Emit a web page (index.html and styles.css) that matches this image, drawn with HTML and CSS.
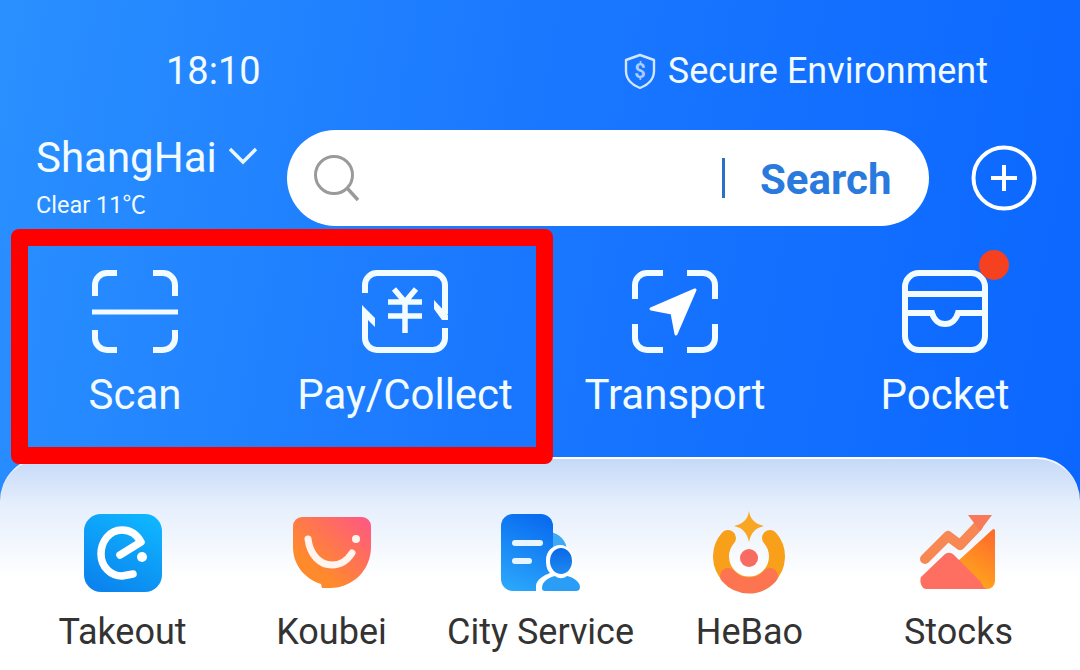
FILE: index.html
```html
<!DOCTYPE html>
<html lang="en">
<head>
  <meta charset="UTF-8" />
  <title>Home</title>
  <link rel="stylesheet" href="styles.css">
</head>
<body>
  <div class="app">

    <div class="status">
      <span class="time">18:10</span>
      <span class="secure">
        <svg class="shield" width="34" height="37" viewBox="0 0 34 37">
          <path d="M17 2 L31 7 V18 C31 26 25 32 17 35 C9 32 3 26 3 18 V7 Z" fill="none" stroke="#d3e6ff" stroke-width="2.4" stroke-linejoin="round"/>
          <text x="17" y="25" text-anchor="middle" class="shield-sign">$</text>
        </svg>
        Secure Environment
      </span>
    </div>

    <div class="search-row">
      <div class="city">
        <div class="city-name">
          ShangHai
          <svg width="30" height="20" viewBox="0 0 30 20"><path d="M2 3 L15 16 L28 3" fill="none" stroke="#eaf7ff" stroke-width="3.4"/></svg>
        </div>
        <div class="weather">Clear 11℃</div>
      </div>
      <div class="search-box">
        <svg width="46" height="47" viewBox="0 0 46 47">
          <circle cx="20" cy="20" r="18.5" fill="none" stroke="#9a9a9a" stroke-width="3"/>
          <path d="M33 33 L44 45" stroke="#9a9a9a" stroke-width="3.4"/>
        </svg>
        <span class="search-line"></span>
        <span class="search-text">Search</span>
      </div>
      <svg class="plus" width="66" height="66" viewBox="0 0 66 66">
        <circle cx="33" cy="33" r="30.5" fill="none" stroke="#fff" stroke-width="4"/>
        <path d="M33 20 V46 M20 33 H46" stroke="#fff" stroke-width="4"/>
      </svg>
    </div>

    <div class="shortcuts">
      <div class="shortcut">
        <svg width="86" height="83" viewBox="0 0 86 83" fill="none" stroke="#f2fbff" stroke-width="6">
          <path d="M3 26 V15 A12 12 0 0 1 15 3 H25 M61 3 H71 A12 12 0 0 1 83 15 V26 M3 60 V68 A12 12 0 0 0 15 80 H25 M61 80 H71 A12 12 0 0 0 83 68 V60"/>
          <path d="M0 42 H86" stroke-width="5"/>
        </svg>
        <span>Scan</span>
      </div>
      <div class="shortcut">
        <svg width="86" height="83" viewBox="0 0 86 83" fill="none" stroke="#f2fbff" stroke-width="6">
          <path d="M3 23 V15 A12 12 0 0 1 15 3 H71 A12 12 0 0 1 83 15 V44 M3 44 V68 A12 12 0 0 0 15 80 H71 A12 12 0 0 0 83 68 V58"/>
          <path d="M72 30 L86 45 V50 H80 L72 39 Z M0 35 L13 48 V57 L6 50 H0 Z" fill="#f2fbff" stroke="none"/>
          <path d="M32 19 L43 32 L54 19 M26 32 H60 M26 46 H60 M43 32 V63" stroke-width="5.5"/>
        </svg>
        <span>Pay/Collect</span>
      </div>
      <div class="shortcut">
        <svg width="86" height="83" viewBox="0 0 86 83" fill="none" stroke="#f2fbff" stroke-width="6">
          <path d="M3 29 V15 A12 12 0 0 1 15 3 H31 M55 3 H71 A12 12 0 0 1 83 15 V29 M3 54 V68 A12 12 0 0 0 15 80 H31 M55 80 H71 A12 12 0 0 0 83 68 V54"/>
          <path d="M63 20 L19 39 L40 43 L44 64 Z" fill="#fff" stroke="#fff" stroke-width="3" stroke-linejoin="round"/>
        </svg>
        <span>Transport</span>
      </div>
      <div class="shortcut">
        <svg width="86" height="83" viewBox="0 0 86 83" fill="none" stroke="#f2fbff" stroke-width="6">
          <rect x="3" y="3" width="80" height="77" rx="14"/>
          <path d="M3 24 H83 M3 43 H30 C32 50 37 54 43 54 C49 54 54 50 56 43 H83"/>
        </svg>
        <span class="dot"></span>
        <span>Pocket</span>
      </div>
    </div>

    <div class="panel">
      <div class="service">
        <div class="service-icon">
          <svg width="78" height="78" viewBox="0 0 78 78">
            <defs>
              <linearGradient id="takeoutBg" x1="0.8" y1="0" x2="0.3" y2="1">
                <stop offset="0" stop-color="#0fb6ff"/>
                <stop offset="1" stop-color="#0b84ee"/>
              </linearGradient>
            </defs>
            <rect width="78" height="78" rx="17" fill="url(#takeoutBg)"/>
            <path d="M36 41 L57 28 C52 19 45 16 38 16 C25 16 17 28 17 40 C17 53 27 62 38 62 L49 60" fill="none" stroke="#fff" stroke-width="7.5" stroke-linecap="round" stroke-linejoin="round"/>
            <circle cx="58" cy="43" r="5" fill="#fff"/>
          </svg>
        </div>
        <span>Takeout</span>
      </div>
      <div class="service">
        <div class="service-icon">
          <svg width="78" height="72" viewBox="0 0 78 72">
            <defs>
              <linearGradient id="koubeiBg" x1="0.1" y1="0.9" x2="1" y2="0">
                <stop offset="0.2" stop-color="#ff8a2c"/>
                <stop offset="1" stop-color="#ff5686"/>
              </linearGradient>
            </defs>
            <path d="M9 0 H69 A9 9 0 0 1 78 9 V30 C78 53 60 71 37 71 L29 71 L28 67 C12 62 0 48 0 30 V9 A9 9 0 0 1 9 0 Z" fill="url(#koubeiBg)"/>
            <path d="M15 22 C17 38 27 48 39 48 C47 48 54 44 59 36" fill="none" stroke="#fff4ee" stroke-width="7" stroke-linecap="round"/>
            <circle cx="63" cy="22" r="4" fill="#fff4ee"/>
          </svg>
        </div>
        <span>Koubei</span>
      </div>
      <div class="service">
        <div class="service-icon">
          <svg width="80" height="78" viewBox="0 0 80 78">
            <defs>
              <linearGradient id="cityBg" x1="0.6" y1="0" x2="0.3" y2="1">
                <stop offset="0" stop-color="#0a6cf0"/>
                <stop offset="1" stop-color="#2aa6fb"/>
              </linearGradient>
              <linearGradient id="cityHead" x1="0" y1="0" x2="0" y2="1">
                <stop offset="0" stop-color="#0a68e6"/>
                <stop offset="1" stop-color="#1d8af0"/>
              </linearGradient>
            </defs>
            <path d="M50 18 C58 20 66 26 66 38 H50 Z" fill="#3fa9f5"/>
            <path d="M12 0 H40 A12 12 0 0 1 52 12 V77 H12 A12 12 0 0 1 0 65 V12 A12 12 0 0 1 12 0 Z" fill="url(#cityBg)"/>
            <rect x="11" y="26" width="31" height="6" rx="3" fill="#e8f5ff"/>
            <rect x="11" y="44" width="20" height="6" rx="3" fill="#e8f5ff"/>
            <path d="M59 31 C67 31 73 38 73 46 C73 52 71 56 68 59 C73 61 80 66 80 72 V78 H35 V72 C35 66 43 61 49 59 C46 56 45 52 45 46 C45 38 51 31 59 31 Z" fill="#fff"/>
            <ellipse cx="60" cy="47" rx="11" ry="13" fill="url(#cityHead)"/>
            <path d="M41 74 C41 67 49 63 54 62 C58 65 62 65 66 62 C71 63 79 67 79 73 C79 76 77 77 75 77 H44 C42 77 41 76 41 74 Z" fill="#2a9df6"/>
          </svg>
        </div>
        <span>City Service</span>
      </div>
      <div class="service">
        <div class="service-icon">
          <svg width="74" height="84" viewBox="1 0 74 84">
            <path d="M37 0 C38 8 43 13 52 15 C43 17 39 22 37 31 C35 22 31 17 22 15 C31 13 36 8 37 0 Z" fill="#f9a625"/>
            <path d="M16 27 A28 28 0 1 0 58 27" fill="none" stroke="#f9a01b" stroke-width="16" stroke-linecap="round"/>
            <path d="M16 65 A28 28 0 0 0 58 65" fill="none" stroke="#fd7550" stroke-width="16" stroke-linecap="round"/>
            <circle cx="37" cy="47" r="9" fill="#f86b60"/>
          </svg>
        </div>
        <span>HeBao</span>
      </div>
      <div class="service">
        <div class="service-icon">
          <svg width="78" height="76" viewBox="2 0 78 76">
            <defs>
              <linearGradient id="stocksBg" x1="0.8" y1="0" x2="0.4" y2="1">
                <stop offset="0" stop-color="#ff6b2b"/>
                <stop offset="1" stop-color="#ffa91c"/>
              </linearGradient>
            </defs>
            <path d="M40 46 L74 15 C76 13 77 14 77 16 V66 A8 8 0 0 1 69 74 H40 Z" fill="url(#stocksBg)"/>
            <path d="M3 62 L26 40 C29 37 33 37 36 40 L62 66 C64 69 66 74 69 74 H8 C4 74 1 67 3 62 Z" fill="#ff6f61"/>
            <path d="M7 44 L30 21 L42 30 L60 11" fill="none" stroke="#f78853" stroke-width="10" stroke-linecap="round" stroke-linejoin="round"/>
            <path d="M50 0 H74 L62 16 Z" fill="#f7795a"/>
          </svg>
        </div>
        <span>Stocks</span>
      </div>
    </div>

    <div class="highlight"></div>
  </div>
</body>
</html>
```

FILE: styles.css
```css
* {
  margin: 0; padding: 0; box-sizing: border-box;
}
html, body {
  width: 1080px;
  height: 670px;
  overflow: hidden;
  font-family: Roboto, 'Noto Sans CJK SC', sans-serif;
}

.app {
  position: relative;
  display: flex;
  flex-direction: column;
  width: 1080px;
  height: 670px;
  background: linear-gradient(100deg, #2a90ff 0%, #1a78ff 45%, #0a66ff 100%);
  color: #f2fbff;
}

/* Barra de estado */
.status {
  display: flex;
  align-items: center;
  justify-content: space-between;
  height: 44px;
  margin-top: 49px;
  padding: 0 92px 0 166px;
}
.time {
  font-size: 38px;
}
.secure {
  display: flex;
  align-items: center;
  gap: 11px;
  font-size: 36px;
}
.shield-sign {
  font-family: Roboto, sans-serif;
  font-size: 20px;
  font-weight: 700;
  fill: #a9cdff;
}

/* Buscador */
.search-row {
  display: flex;
  align-items: center;
  height: 96px;
  margin-top: 37px;
  padding-left: 36px;
}
.city {
  width: 251px;
}
.city-name {
  display: flex;
  align-items: center;
  gap: 11px;
  font-size: 42px;
  line-height: 52px;
  margin-top: -4px;
}
.city-name svg {
  margin-bottom: 4px;
}
.weather {
  font-size: 23.5px;
  line-height: 30px;
  margin-top: 6px;
}
.search-box {
  display: flex;
  align-items: center;
  width: 642px;
  height: 96px;
  padding-left: 27px;
  background: #fff;
  border-radius: 48px;
}
.search-line {
  width: 3px;
  height: 40px;
  margin-left: 362px;
  background: #2a70c8;
}
.search-text {
  margin: 3px 0 0 35px;
  font-size: 42px;
  font-weight: 700;
  color: #2a7ade;
}
.plus {
  margin-left: 42px;
}

/* Accesos */
.shortcuts {
  display: grid;
  grid-template-columns: repeat(4, 270px);
  margin-top: 44px;
  height: 188px;
}
.shortcut {
  position: relative;
  display: flex;
  flex-direction: column;
  align-items: center;
  gap: 18px;
  font-size: 42px;
  line-height: 48px;
}
.dot {
  position: absolute;
  top: -20px;
  left: 169px;
  width: 30px;
  height: 30px;
  border-radius: 50%;
  background: #f5411f;
}

/* Panel de servicios */
.panel {
  display: grid;
  grid-template-columns: repeat(5, 209px);
  flex: 1;
  margin-top: -1px;
  padding: 52px 0 0 18px;
  border-top: 2px solid rgba(255, 255, 255, 0.75);
  border-radius: 44px 44px 0 0;
  background: linear-gradient(to bottom, #c5d9f8 0%, #e4eefc 44px, #fff 118px);
  color: #333;
}
.service {
  display: flex;
  flex-direction: column;
  align-items: center;
  font-size: 36px;
  line-height: 44px;
}
.service-icon {
  display: flex;
  align-items: center;
  justify-content: center;
  height: 84px;
  margin-bottom: 15px;
}

/* Marco rojo */
.highlight {
  position: absolute;
  top: 229px;
  left: 11px;
  width: 542px;
  height: 235px;
  border: 17px solid #f00;
  border-radius: 8px;
}
```
